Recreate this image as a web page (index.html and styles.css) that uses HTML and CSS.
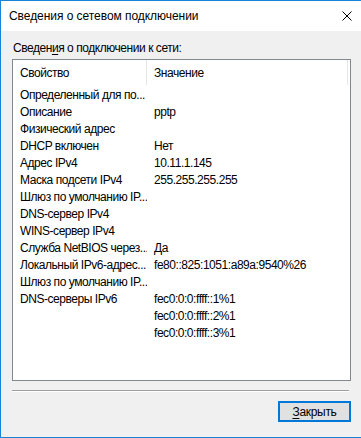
FILE: index.html
```html
<!DOCTYPE html>
<html lang="ru">
<head>
  <meta charset="UTF-8" />
  <title>Сведения о сетевом подключении</title>
  <link rel="stylesheet" href="styles.css">
</head>
<body>
  <div class="window">
    <div class="titlebar">
      <span class="title">Сведения о сетевом подключении</span>
      <svg class="close" width="10" height="10" viewBox="0 0 10 10">
        <path d="M0.5 0.5 L9.5 9.5 M9.5 0.5 L0.5 9.5" stroke="#000" stroke-width="1" fill="none"/>
      </svg>
    </div>

    <div class="content">
      <div class="label">Сведен<u>и</u>я о подключении к сети:</div>

      <div class="listbox">
        <div class="list-header">
          <div class="col col-prop">Свойство</div>
          <div class="col col-val">Значение</div>
        </div>
        <div class="rows">
          <div class="row"><span class="prop">Определенный для по...</span><span class="val"></span></div>
          <div class="row"><span class="prop">Описание</span><span class="val">pptp</span></div>
          <div class="row"><span class="prop">Физический адрес</span><span class="val"></span></div>
          <div class="row"><span class="prop">DHCP включен</span><span class="val">Нет</span></div>
          <div class="row"><span class="prop">Адрес IPv4</span><span class="val">10.11.1.145</span></div>
          <div class="row"><span class="prop">Маска подсети IPv4</span><span class="val">255.255.255.255</span></div>
          <div class="row"><span class="prop">Шлюз по умолчанию IP...</span><span class="val"></span></div>
          <div class="row"><span class="prop">DNS-сервер IPv4</span><span class="val"></span></div>
          <div class="row"><span class="prop">WINS-сервер IPv4</span><span class="val"></span></div>
          <div class="row"><span class="prop">Служба NetBIOS через...</span><span class="val">Да</span></div>
          <div class="row"><span class="prop">Локальный IPv6-адрес...</span><span class="val">fe80::825:1051:a89a:9540%26</span></div>
          <div class="row"><span class="prop">Шлюз по умолчанию IP...</span><span class="val"></span></div>
          <div class="row"><span class="prop">DNS-серверы IPv6</span><span class="val">fec0:0:0:ffff::1%1</span></div>
          <div class="row"><span class="prop"></span><span class="val">fec0:0:0:ffff::2%1</span></div>
          <div class="row"><span class="prop"></span><span class="val">fec0:0:0:ffff::3%1</span></div>
        </div>
      </div>

      <div class="separator"></div>

      <div class="buttons">
        <button class="btn" type="button"><u>З</u>акрыть</button>
      </div>
    </div>
  </div>
</body>
</html>
```

FILE: styles.css
```css
/* Базовые стили */
*, *::before, *::after {
  box-sizing: border-box;
}

html, body {
  margin: 0;
  padding: 0;
  background: #f0f0f0;
  font-family: 'Liberation Sans', Arial, sans-serif;
  font-size: 12px;
  color: #000;
  overflow: hidden;
}

/* Окно диалога */
.window {
  width: 361px;
  height: 438px;
  border-top: 1px solid #1883d7;
  border-left: 1px solid #1883d7;
  border-bottom: 1px solid #1883d7;
  display: flex;
  flex-direction: column;
}

.titlebar {
  height: 30px;
  background: #fff;
  display: flex;
  align-items: center;
  justify-content: space-between;
  padding: 0 9px 0 8px;
}
.title { font-size: 12px; letter-spacing: -0.05px; }
.close { display: block; }

.content {
  flex: 1;
  background: #f0f0f0;
  padding: 9px 10px 15px 11px;
  display: flex;
  flex-direction: column;
  letter-spacing: -0.45px;
}

.label {
  line-height: 16px;
  height: 16px;
  padding-left: 1px;
}
.label u { text-underline-offset: 2px; }

/* Список свойств */
.listbox {
  margin-top: 3px;
  height: 322px;
  background: #fff;
  border: 1px solid #828790;
}

.list-header {
  display: flex;
  height: 25px;
  align-items: stretch;
}
.list-header .col {
  display: flex;
  align-items: center;
  padding-left: 7px;
  border-right: 1px solid #e5e5e5;
}
.col-prop { width: 134px; }
.col-val { width: 201px; }

.rows { padding-top: 2px; }
.row {
  display: flex;
  height: 17px;
  line-height: 17px;
  white-space: nowrap;
}
.row .prop { width: 134px; padding-left: 7px; overflow: hidden; }
.row .val { padding-left: 7px; }

/* Разделитель и кнопки */
.separator {
  margin-top: 9px;
  width: 337px;
  height: 2px;
  border-top: 1px solid #a0a0a0;
  border-bottom: 1px solid #fff;
}

.buttons {
  margin-top: 9px;
  display: flex;
  justify-content: flex-end;
}
.btn {
  width: 73px;
  height: 21px;
  background: #e1e1e1;
  border: 2px solid #0078d7;
  font-family: inherit;
  font-size: 12px;
  letter-spacing: -0.3px;
  color: #000;
  padding: 0;
  margin: 0;
}
.btn u { text-underline-offset: 2px; }
```
